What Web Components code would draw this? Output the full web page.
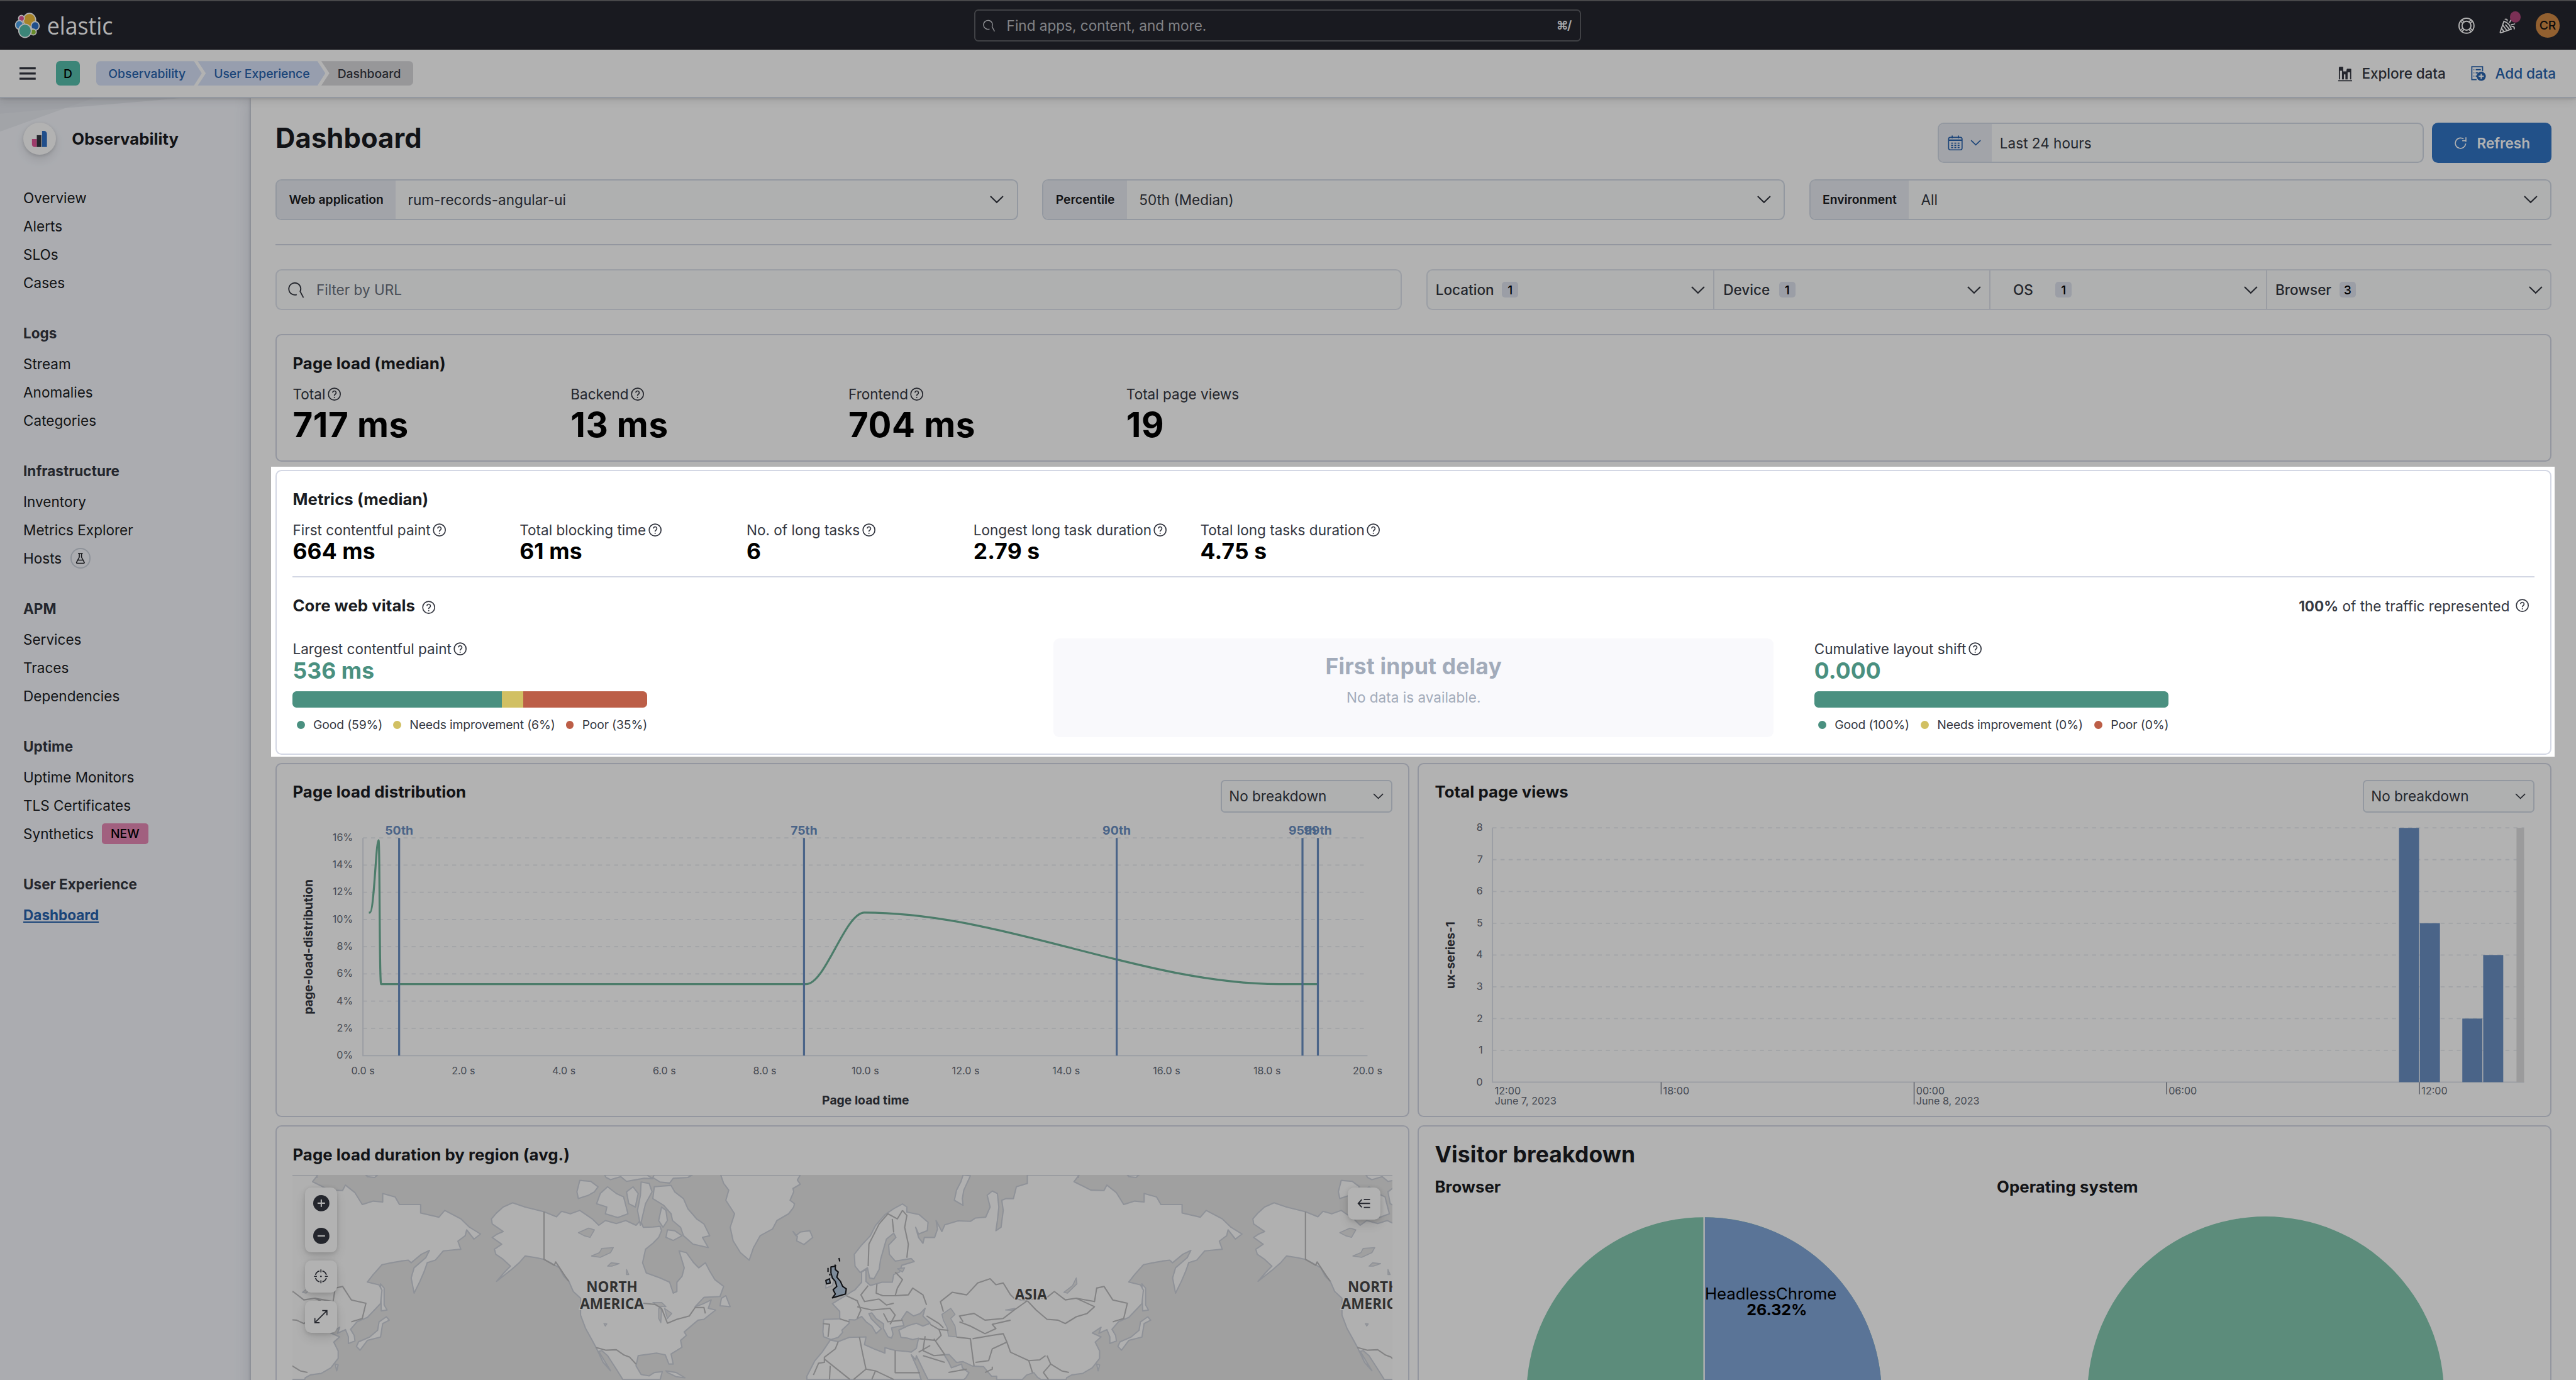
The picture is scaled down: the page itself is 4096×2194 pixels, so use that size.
<!DOCTYPE html>
<html lang="en">
<head>
<meta charset="utf-8">
<title>Dashboard - User Experience - Observability</title>
<style>
html,body{margin:0;padding:0;background:#b2b2b2;overflow:hidden}
body{font-family:Inter,"Liberation Sans",sans-serif}
</style>
</head>
<body>
<ux-app></ux-app>
<script>
const define=(name,render)=>customElements.define(name,class extends HTMLElement{
  connectedCallback(){
    if(this.shadowRoot)return;
    this.attachShadow({mode:'open'}).innerHTML=render(k=>this.getAttribute(k)||'',this);
  }
});

/* ---------- icons ---------- */
const ICONS={
  help:'<circle cx="8" cy="8" r="6.5"/><path d="M6.1 6.4a1.9 1.9 0 1 1 2.9 1.6c-.65.4-1 .75-1 1.5v.2"/><path d="M8 11v1.2"/>',
  search:'<path d="M8.600 12.600A5.900 5.900 0 1 1 12 9.600L15.200 15.600" /><path d="M12 9.600l-.7 1.500 3.900 4.500" stroke="none"/>',
  down:'<path d="M1.800 5l6.200 6 6.200-6" stroke-width="1.35"/>',
  menu:'<path d="M0 2.9h16M0 8h16M0 13.1h16" stroke-width="2"/>',
  lifebuoy:'<circle cx="8" cy="8" r="7.4" stroke-width="1.2"/><circle cx="8" cy="8" r="4.4" stroke-width="1.2"/><path d="M3.2 1.8l2.6 2.8M1.8 3.2l2.8 2.6M12.8 1.8l-2.6 2.8M14.2 3.2l-2.8 2.6M3.2 14.2l2.6-2.8M1.8 12.8l2.8-2.6M12.8 14.2l-2.6-2.8M14.2 12.8l-2.8-2.6" stroke-width="1"/>',
  cheer:'<path d="M4.6 3.6L.9 14.3c-.1.4.3.8.7.7l10.2-3.6c-1-3.6-3.6-6.7-7.2-7.8zM3.4 7.4l4 5.2M2.3 10.6l2.4 3.1M6 6.9l4.1 4.8" stroke-width="1.15"/><path d="M5.4 1.8c1.6-.9 3 .1 2.2 1.9M10 5.2l1.6-3M11.4 7.5c1.2-1.5 2.9-.2 4.1-1.6M12 9c1.8-.8 3.5.4 2.6 2.6" stroke-width="1.15"/>',
  bars:'<path d="M1.6 1.5h3.6v12.6M1.9 14.1V1.5M5.6 6.3h3.2v7.8M6 14.1V6.3M9.9 3.6h3.8v10.5M9.9 14.1V3.6M.6 15.5h14.6" stroke-width="1.2"/><path d="M1.9 1h3.6v4H1.9zM9.8 3h3.9v3.6H9.8zM5.8 6.3h4v2.4h-4z" fill="currentColor" stroke="none"/>',
  add:'<path d="M12.2 5.5V.7H.9v13.6h5" stroke-width="1.2"/><path d="M2.8 3.8h.7M5 3.8h5.4M2.8 7.2h.7M5 7.2h2.5M2.8 10.6h.7M5 10.6h1" stroke-width="1.2"/><circle cx="10.8" cy="10.8" r="4.8" fill="currentColor" stroke="none"/><path d="M8.1 10.8h5.4M10.8 8.1v5.4" stroke="#fff" stroke-width="1.3"/>',
  calendar:'<rect x=".9" y="2.2" width="14.2" height="13.2" rx="1.8"/><path d="M1 5.2h14" stroke-width="1.6"/><path d="M4.7.3v3M11.3.3v3"/><path d="M3.6 8.3h2M7 8.3h2M10.4 8.3h2M3.6 10.6h2M7 10.6h2M10.4 10.6h2M3.6 12.9h2M7 12.9h2M10.4 12.9h2" stroke-width="1.2"/>',
  refresh:'<path d="M14.5 6.5V1M14.5 5.2H10M11.6 3A6.3 6.3 0 1 0 14.2 8.6" stroke-width="1.2"/>',
  beaker:'<path d="M4.600 1h6.800M6.400 1v5.200L2.500 13.400c-.5 1 .1 1.500 1 1.500h9c.9 0 1.500-.5 1-1.500L9.600 6.200V1M4.500 10.300h7" stroke-width="1.350"/>',
  plus:'<circle cx="8" cy="8" r="8" fill="currentColor" stroke="none"/><path d="M4.300 8h7.400M8 4.300v7.400" stroke="#fff" stroke-width="1.300"/>',
  minus:'<circle cx="8" cy="8" r="8" fill="currentColor" stroke="none"/><path d="M4.300 8h7.400" stroke="#fff" stroke-width="1.300"/>',
  fit:'<path d="M9.700 1.900a6.300 6.300 0 0 1 4.400 4.400M14.100 9.700a6.300 6.300 0 0 1-4.400 4.400M6.300 14.100a6.300 6.300 0 0 1-4.400-4.400M1.900 6.300a6.300 6.300 0 0 1 4.400-4.400" stroke-width="1.200"/><path d="M8 .2v3.300M8 12.500v3.300M.2 8h3.300M12.500 8h3.300" stroke-width="1.200"/><circle cx="8" cy="8" r=".9" fill="currentColor" stroke="none"/>',
  expand:'<path d="M1.500 14.500l13-13M9.500 1.200h5.300v5.300M1.200 9.500v5.300h5.300" stroke-width="1.200"/>',
  legend:'<path d="M1.300 8h13.200M5.200 3.600L1.200 8l4 4.400M7.500 3.500h7M7.500 12.500h7" stroke-width="1.300"/>',
  obs:'<path d="M.5 8h4.800v8H3.200A2.700 2.700 0 0 1 .5 13.300z" fill="#e3579a" stroke="none"/><path d="M5.300 4.300h4.500V16H5.300z" fill="#343741" stroke="none"/><path d="M10.500 0h1.800a3 3 0 0 1 3 3v13h-4.800z" fill="#2f70c8" stroke="none"/>'
};
const icon=(n,s=16)=>`<ux-icon name="${n}" style="--s:${s}px"></ux-icon>`;
define('ux-icon',a=>`<style>:host{display:block;flex:none;width:var(--s,16px);height:var(--s,16px)}svg{display:block;width:100%;height:100%;overflow:visible}</style>
<svg viewBox="0 0 16 16" fill="none" stroke="currentColor" stroke-width="1.15">${ICONS[a('name')]}</svg>`);

/* ---------- top bars ---------- */
define('ux-topbar',()=>`<style>
:host{display:flex;flex:none;box-sizing:border-box;height:49px;border-top:1.250px solid #67686b;background:#25262e;align-items:center;color:#fff}
.side{display:flex;align-items:center}
.logo{box-sizing:border-box;padding-left:15px;width:961.500px;flex:none}
.logo svg{display:block}
.search{box-sizing:border-box;flex:none;width:599.500px;height:32px;border:1.250px solid #5c5e64;border-radius:4px;display:flex;align-items:center;font-size:14px;color:#b9bbc0}
.search ux-icon{margin:0 11.500px 0 7.500px;color:#d0d2d7}
.search b{margin-left:auto;padding-right:9px;font-size:12px;font-weight:600;color:#f0f1f4;letter-spacing:-1px}
.right{flex:1;justify-content:flex-end;gap:24px;padding-right:16px}
.news{position:relative}
.dot{position:absolute;left:10.500px;top:-5.700px;width:11px;height:11px;border-radius:50%;background:#b0457a}
.av{width:24px;height:24px;border-radius:50%;background:#d28a46;color:#111;font-size:12px;font-weight:500;display:flex;align-items:center;justify-content:center;margin-left:-4px}
</style>
<div class="side logo"><svg width="98" height="26" viewBox="0 0 98 26" overflow="visible">
<g stroke="#fff" stroke-width="1.100">
<ellipse cx="14.200" cy="7.300" rx="6.100" ry="6.600" fill="#f0bd3c"/><ellipse cx="6.300" cy="5.700" rx="2.900" ry="2.900" fill="#e3579a"/><ellipse cx="4.200" cy="12.200" rx="3.800" ry="4.300" fill="#4ba4ec"/><ellipse cx="19.800" cy="13.200" rx="4" ry="4.300" fill="#2f70c8"/><ellipse cx="18" cy="19.200" rx="2.900" ry="2.900" fill="#94c83d"/><ellipse cx="9.800" cy="18" rx="6.200" ry="6.600" fill="#57bfad"/></g>
<text x="31.500" y="21.800" fill="#fff" font-family="'Open Sans','Noto Sans',sans-serif" font-size="24" font-weight="400" textLength="65" lengthAdjust="spacingAndGlyphs">elastic</text></svg></div>
<div class="search">${icon('search',12)}<span>Find apps, content, and more.</span><b>⌘/</b></div>
<div class="side right">${icon('lifebuoy')}<div class="news">${icon('cheer')}<i class="dot"></i></div><div class="av">CR</div></div>`);

define('ux-crumbbar',()=>`<style>
:host{display:flex;flex:none;box-sizing:border-box;height:48px;background:#fff;border-bottom:1.250px solid #d3dae6;align-items:center;position:relative;z-index:2;box-shadow:0 1px 2px rgba(0,0,0,.08),0 3px 8px rgba(0,0,0,.1);padding:0 20px 0 19px;color:#343741}
.d{margin:0 16px 0 20px;width:24px;height:24px;border-radius:4px;background:#57bfad;color:#000;font-size:12px;font-weight:500;display:flex;align-items:center;justify-content:center}
.c{height:24px;display:flex;align-items:center;font-size:12px;font-weight:500;background:#d8e3f9;color:#2863ae;box-sizing:border-box;white-space:nowrap}
.c1{width:104.200px;padding-left:12px;border-radius:4px 0 0 4px;clip-path:polygon(0 0,96.500px 0,100% 50%,96.500px 100%,0 100%)}
.c2{width:126px;margin-left:-4px;padding-left:16px;clip-path:polygon(0 0,118.200px 0,100% 50%,118.200px 100%,0 100%,8px 50%)}
.c3{width:91px;margin-left:-4px;padding-left:16px;border-radius:0 4px 4px 0;background:#d8d8dc;color:#343741;clip-path:polygon(0 0,100% 0,100% 100%,0 100%,8px 50%)}
.acts{margin-left:auto;display:flex;align-items:center;font-size:14px;font-weight:500;letter-spacing:-.05px}
.acts span{margin-left:9px}.blue{color:#2863ae}.blue:not(span){margin-left:25px}
</style>${icon('menu')}<div class="d">D</div>
<div class="c c1">Observability</div><div class="c c2">User Experience</div><div class="c c3">Dashboard</div>
<div class="acts">${icon('bars',15)}<span>Explore data</span><ux-icon class="blue" name="add" style="--s:15px"></ux-icon><span class="blue">Add data</span></div>`);

/* ---------- side navigation ---------- */
define('ux-navgroup',(a)=>`<style>
:host{display:block;margin-bottom:24px;font-size:14px;color:#1a1c21}
h3{margin:0 0 4px;font-size:14px;line-height:24px;font-weight:700;color:#343741}
::slotted(*){display:flex;align-items:center;height:28px}
</style>${a('heading')?`<h3>${a('heading')}</h3>`:''}<slot></slot>`);
define('ux-badge',(a)=>`<style>:host{display:inline-flex;align-items:center;justify-content:center;box-sizing:border-box}
:host([kind=new]){margin-left:8px;width:46px;height:20px;border-radius:3px;background:#e78ab6;color:#000;font-size:12px;font-weight:500}
:host([kind=lab]){margin-left:8.500px;width:20px;height:20px;border:1.250px solid #cbd1dc;border-radius:50%;color:#1a1c21;background:#f5f7fd}</style><slot></slot>`);
define('ux-sidenav',()=>`<style>
:host{display:block;width:248px;flex:none;background:#f5f7fd;position:relative;overflow:hidden}
.deco{position:absolute;left:0;top:0}
.in{position:relative;padding:24px 23px}
.head{display:flex;align-items:center;gap:16px;font-size:16px;font-weight:700;color:#1a1c21;margin-bottom:28px}
.ic{width:32px;height:32px;border-radius:50%;background:#fff;display:flex;align-items:center;justify-content:center;box-shadow:0 1px 3px rgba(0,0,0,.14),0 5px 10px rgba(0,0,0,.1)}
.sel{color:#2863ae;font-weight:700;text-decoration:underline}
</style>
<svg class="deco" width="248" height="40" viewBox="0 97 248 40"><path d="M0 97H178L0 112.400z" fill="#dfe2ea" opacity=".7"/><path d="M0 97H92L0 130z" fill="#dfe2ea" opacity=".6"/></svg>
<div class="in"><div class="head"><div class="ic">${icon('obs',16)}</div>Observability</div>
<ux-navgroup><div>Overview</div><div>Alerts</div><div>SLOs</div><div>Cases</div></ux-navgroup>
<ux-navgroup heading="Logs"><div>Stream</div><div>Anomalies</div><div>Categories</div></ux-navgroup>
<ux-navgroup heading="Infrastructure"><div>Inventory</div><div>Metrics Explorer</div><div>Hosts<ux-badge kind="lab">${icon('beaker',11)}</ux-badge></div></ux-navgroup>
<ux-navgroup heading="APM"><div>Services</div><div>Traces</div><div>Dependencies</div></ux-navgroup>
<ux-navgroup heading="Uptime"><div>Uptime Monitors</div><div>TLS Certificates</div><div>Synthetics<ux-badge kind="new">NEW</ux-badge></div></ux-navgroup>
<ux-navgroup heading="User Experience"><div class="sel">Dashboard</div></ux-navgroup></div>`);

/* ---------- form controls ---------- */
define('ux-field',(a)=>`<style>
:host{display:flex;box-sizing:border-box;height:40px;border:1.250px solid #d3dae6;border-radius:6px;background:#fbfdfc;align-items:center;font-size:14px;color:#343741;overflow:hidden;flex:1}
:host([small]){height:32px;width:169.500px;flex:none;border-radius:4px}
.pre{height:100%;display:flex;align-items:center;gap:8px;padding:0 12px;background:#e9ebf2;font-size:12px;font-weight:600;color:#1a1c21}
.pre.ico{color:#2863ae;padding:0 9.500px 0 8.500px;gap:7px}
.v{padding-left:12px;flex:1}
:host([small]) .v{padding-left:7px}
:host([date]) .v{padding-left:8px}
.e{margin-right:11.500px}:host([small]) .e{margin-right:6.500px}
.s{margin-left:11px;color:#343741}.s+.v{color:#69707d}
</style>${a('label')?`<div class="pre">${a('label')}</div>`:''}${a('date')?`<div class="pre ico">${icon('calendar',15)}${icon('down',12)}</div>`:''}${a('search')?`<ux-icon class="s" name="search"></ux-icon>`:''}<div class="v"><slot></slot></div>${a('plain')?'':`<ux-icon class="e" name="down" style="--s:${a('small')?12:16}px"></ux-icon>`}`);

define('ux-filter',(a)=>`<style>
:host{display:flex;align-items:center;box-sizing:border-box;padding:0 7px 0 8px;font-size:14px;font-weight:500;color:#343741;border-left:1.250px solid #dde1ea;flex:none}
:host(:first-child){border-left:0}:host(:last-child){padding-right:6.500px}
.t{min-width:48px;text-align:center}
.n{margin-left:8px;width:16px;height:16px;border-radius:3px;background:#dfe3ee;color:#000;font-size:12px;font-weight:500;display:flex;align-items:center;justify-content:center}
ux-icon{margin-left:auto}
</style><span class="t"><slot></slot></span><span class="n">${a('count')}</span>${icon('down')}`);

/* ---------- panels and stats ---------- */
define('ux-panel',()=>`<style>:host{display:flex;flex-direction:column;box-sizing:border-box;border:1.250px solid #d3d7e4;border-radius:6px;background:#fff;padding:15.750px}</style><slot></slot>`);
define('ux-title',()=>`<style>:host{display:block;font-size:16px;line-height:24px;font-weight:700;color:#1a1c21;white-space:nowrap;letter-spacing:.03px}:host([big]){font-size:22px;letter-spacing:.1px}</style><slot></slot>`);
define('ux-stat',(a)=>`<style>
:host{display:block;color:#343741;white-space:nowrap;flex:none}
.l{display:flex;align-items:center;gap:1.500px;height:20px;font-size:14px}
.v{font-size:22px;line-height:24px;font-weight:700;color:#000;letter-spacing:.08px}
:host([large]) .v{font-size:34px;line-height:36px;margin-top:2px;letter-spacing:.35px}
:host([good]) .v{color:#4a9080}
</style><div class="l"><span>${a('label')}</span>${a('nohelp')?'':icon('help',14.500)}</div><div class="v">${a('value')}</div>`);
define('ux-vital',(a)=>{
  const [g,n,p]=a('split').split(',').map(Number);
  return `<style>
:host{display:block;flex:1}
.bar{display:flex;width:350px;height:16px;border-radius:4px;overflow:hidden;margin-top:8px}
.g{background:#4a9080}.n{background:#d1c063}.p{background:#bc5e47}
.lg{display:flex;align-items:center;margin-top:7px;height:20px;width:350px;justify-content:space-between;font-size:12px;color:#343741;letter-spacing:-.08px}
.lg span{display:flex;align-items:center;white-space:nowrap}
i{width:8px;height:8px;border-radius:50%;margin:0 8.200px 0 4px}
</style><ux-stat good label="${a('label')}" value="${a('value')}"></ux-stat>
<div class="bar"><div class="g" style="width:${g}%"></div><div class="n" style="width:${n}%"></div><div class="p" style="width:${p}%"></div></div>
<div class="lg"><span><i class="g"></i>Good (${g}%)</span><span><i class="n"></i>Needs improvement (${n}%)</span><span><i class="p"></i>Poor (${p}%)</span></div>`});
define('ux-nodata',(a)=>`<style>:host{display:block;flex:1;box-sizing:border-box;background:#f9f9fc;border-radius:6px;padding-top:16px;text-align:center;color:#a2abba}
b{display:block;font-size:22px;line-height:24px;letter-spacing:.1px}p{margin:8px 0 0;font-size:14px;line-height:20px}</style><b>${a('heading')}</b><p><slot></slot></p>`);

/* ---------- charts (coordinates are page units) ---------- */
const chartCss=`<style>:host{display:block}svg{display:block;overflow:visible;font-size:10px;fill:#646a77}
.g{stroke:#e7eaf0;stroke-width:1.100;stroke-dasharray:4 4;fill:none}.a{stroke:#e0e4ec;stroke-width:1.300;fill:none}.t{font-size:12px;font-weight:700;fill:#343741}.m{text-anchor:middle}.e{text-anchor:end}</style>`;
define('ux-distchart',()=>{
  let s='';
  for(let i=0;i<=8;i++){const y=1041.8-i*26.86;
    if(i)s+=`<path class="g" d="M358.600 ${y}H1350"/>`;
    s+=`<text class="e" x="348.700" y="${y+3}">${i*2}%</text>`}
  for(let i=0;i<=10;i++)s+=`<text class="m" x="${358.6+i*99.17}" y="1060.200">${i*2}.0 s</text>`;
  const lines=[[394.3,'50th'],[794,'75th'],[1102.7,'90th'],[1286.1,'95th'],[1301.3,'99th']]
    .map(([x,l])=>`<path d="M${x} 827V1041.800" stroke="#6a90c3" stroke-width="2"/><text class="m" x="${x}" y="823.700" style="font-size:12px;font-weight:700;fill:#6a90c3">${l}</text>`).join('');
  return chartCss+`<svg width="100%" height="284" viewBox="289 802 1085.500 284">
${s}<path class="a" d="M358.600 827V1041.800H1350.300"/>
<path d="M364.400 900.600H365.500C369.500 900.600 371.500 829.200 374 829.200C375.200 829.200 374.800 971.300 376.500 971.300H796C815.200 971.300 834.500 900.600 853.700 900.600C990.600 900.600 1127.600 971.300 1264.500 971.300H1301.300" fill="none" stroke="#6db299" stroke-width="2"/>
${lines}
<text class="t m" x="854.800" y="1089.800">Page load time</text>
<text class="t m" transform="translate(309 934.500) rotate(-90)">page-load-distribution</text></svg>`});
define('ux-viewschart',()=>{
  let s='';
  for(let i=0;i<=8;i++){const y=1068-i*31.37;
    if(i)s+=`<path class="g" d="M1473 ${y}H2491.500"/>`;
    s+=`<text class="e" x="1463.500" y="${y+3.2}">${i}</text>`}
  const bars=[[2368,8],[2388.600,5],[2430.500,2],[2451.100,4]].map(([x,v])=>`<rect x="${x}" y="${1068-v*31.37}" width="19.800" height="${v*31.37}" fill="#6a90c3"/>`).join('');
  const ticks=[[1639.600,1080,'18:00'],[1889.300,1090,'00:00'],[2138.500,1080,'06:00'],[2388.200,1080,'12:00']].map(([x,y,l])=>`<path d="M${x} 1068V${y}" stroke="#8b909c"/><text x="${x+2}" y="1080">${l}</text>`).join('');
  return chartCss+`<svg width="100%" height="284" viewBox="1416.500 802 1085.500 284">${s}
<path class="a" d="M1473 817V1068H2491.500"/>${bars}<rect x="2484" y="817" width="7.500" height="251" fill="#dedee0"/>
${ticks}<text x="1475.300" y="1080">12:00</text><text x="1475.300" y="1090">June 7, 2023</text><text x="1891.300" y="1090">June 8, 2023</text>
<text class="t m" transform="translate(1436 942.800) rotate(-90)">ux-series-1</text></svg>`});

/* land outlines on a Mercator grid; one world spans 1043 units */
const LAND=[
'328,495 345,520 371,548 388,578 395,545 407,560 420,540 437,590 446,628 455,600 470,618 483,600 497,628 503,600 507,640 520,638 530,634 532,660 528,700 520,735 510,770 506,850 511,910 530,940 543,965 548,1030 553,1020 553,965 560,930 563,880 556,780 566,790 576,850 583,880 592,850 598,900 605,950 617,990 612,1050 590,1055 578,1110 588,1095 600,1070 596,1120 606,1130 590,1185 582,1190 575,1215 563,1260 566,1280 558,1310 560,1350 545,1390 548,1450 542,1450 537,1395 525,1385 500,1400 497,1460 504,1512 515,1520 522,1500 533,1495 530,1542 479,1542 470,1480 458,1400 450,1370 446,1375 462,1490 452,1440 442,1350 437,1310 428,1240 421,1160 421,1060 411,1020 405,960 398,930 392,880 380,850 371,830 360,820 345,810 337,850 325,895 306,960 316,910 325,870 315,830 305,800 303,770 313,740 300,700 307,680 315,665 300,620 299,590 306,555 315,520',
'420,362 435,368 445,400 440,430 432,450 418,470 416,430','448,440 458,400 470,440 480,460 486,560 472,582 455,560 457,520 443,500',
'484,430 493,400 500,440 496,520 487,500','504,372 515,380 519,430 510,500 503,628 499,540 503,450','522,400 545,392 550,430 562,470 568,530 580,590 590,620 598,690 588,700 596,760 575,740 562,690 558,640 547,600 545,560 535,510 520,470','454,330 512,330 520,352 508,350 484,368 476,340 462,358 456,345','522,330 574,330 568,345 548,350 543,378 530,372 520,345','540,655 550,660 560,690 548,718 538,700','532,520 538,540 540,600 534,640 528,600',
'613,330 722,330 718,360 722,385 712,410 713,430 708,480 714,500 713,520 706,560 690,600 684,650 667,690 658,760 652,835 640,790 630,720 626,640 632,560 620,480 624,420 617,380',
'712,665 716,690 722,668 735,660 739,700 727,742 717,720 718,695','614,1060 620,1045 626,1110 612,1105',
'945,330 955,335 946,420 944,470 945,510 933,480 936,420 942,370',
'1170,330 1186,330 1182,345 1172,340','1093,330 1103,330 1103,345','757,970 764,935 768,950 766,985 757,1000','1198,1170 1202,1190 1193,1210 1190,1290 1172,1310 1162,1368 1157,1345 1160,1318 1175,1290 1186,1250 1188,1200','1190,975 1195,1000 1195,1100 1199,1130 1191,1135','538,1490 552,1500 564,1531 552,1525 540,1500','1128,1450 1132,1455 1130,1490',
'862,502 868,520 868,550 885,565 897,610 896,660 884,680 880,640 884,700 890,735 892,700 906,700 910,650 908,600 916,665 920,625 938,602 955,605 962,585 976,580 982,520 978,450 985,425 992,440 994,520 992,600 990,660 997,640 1000,540 998,480 1004,470 1014,470 1018,400 1033,380 1033,330 1104,330 1097,370 1111,400 1120,420 1138,422 1142,390 1155,435 1165,505 1180,485 1193,490 1193,440 1210,460 1216,505 1245,505 1245,555 1270,580 1278,540 1300,590 1312,640 1327,680 1318,710 1308,655 1306,690 1296,722 1300,770 1276,780 1265,835 1254,850 1250,900 1244,960 1236,1030 1232,940 1236,880 1252,820 1257,777 1246,800 1232,850 1228,835 1218,840 1205,850 1192,862 1180,920 1172,964 1188,981 1192,1013 1190,1092 1172,1174 1158,1199 1149,1244 1154,1281 1155,1313 1146,1328 1146,1289 1142,1246 1131,1268 1134,1232 1122,1266 1134,1289 1126,1320 1132,1372 1132,1416 1122,1472 1109,1505 1094,1514 1087,1531 1086,1542 1052,1542 1047,1529 1042,1501 1032,1515 1026,1542 991,1542 991,1522 984,1522 977,1486 973,1465 958,1462 945,1436 936,1440 926,1394 919,1394 925,1436 929,1472 943,1450 944,1472 953,1501 949,1530 946,1542 897,1542 893,1508 881,1401 880,1424 874,1395 883,1480 887,1536 888,1542 731,1542 731,1522 742,1430 752,1379 763,1308 774,1317 789,1292 812,1289 810,1335 823,1360 838,1385 838,1353 852,1369 867,1375 874,1379 881,1357 884,1297 876,1305 868,1296 860,1292 857,1249 870,1222 881,1208 890,1225 900,1208 890,1165 893,1120 886,1151 877,1165 868,1138 861,1182 864,1223 855,1228 847,1236 849,1273 847,1296 842,1288 836,1241 836,1211 826,1182 820,1147 816,1151 819,1180 826,1211 833,1241 829,1257 826,1270 820,1225 812,1199 806,1168 797,1189 789,1187 789,1208 779,1249 780,1262 774,1292 764,1305 754,1288 753,1260 754,1186 776,1182 776,1138 766,1092 775,1068 785,1043 792,1022 797,1010 806,965 806,905 812,890 812,960 818,985 834,965 848,965 850,920 858,905 861,865 878,843 874,825 852,840 844,800 843,745 853,700 850,675 840,710 836,770 832,830 830,890 823,945 817,940 814,880 804,908 797,870 796,800 806,745 818,690 825,630 838,565 850,530'];
const LAKES=['916,1156 928,1120 934,1156 928,1180 934,1225 936,1289 925,1284 923,1233 918,1191','1100,940 1101,975 1088,1030 1083,1025 1095,985','418,672 432,645 440,655 434,700 426,690','436,810 447,790 450,765 466,760 462,790 448,818','458,870 463,850 474,855 464,870','484,890 487,920 484,920','520,1085 532,1085 538,1110 528,1108','528,1120 532,1125 531,1205 528,1180','536,1120 546,1150 540,1180','855,885 865,880 862,905','1003,1130 1016,1120 1012,1132','453,1210 457,1212 455,1225'];
const BORDERS=['371,548 371,830 385,865 387,845 400,930 405,960','507,1090 523,1097 532,1120 540,1208 553,1185 570,1165 578,1115 590,1115 592,1150','442,1352 456,1368 470,1365 480,1395 488,1408 497,1450',
'815,870 816,740 830,620 842,560 855,590 862,540','850,670 848,590','862,540 868,570 865,640 870,740 868,820','852,905 862,950 855,1000 852,1045 870,1040 876,1000 890,1040 895,1100','827,975 826,1030 835,1045 852,1045','815,985 805,1040 810,1080 830,1065','785,1045 800,1075 805,1130 800,1180','800,1110 820,1130 845,1120 852,1160 845,1215','830,1065 840,1100 850,1090','836,1150 842,1200 862,1190','776,1182 789,1200','753,1210 762,1215 760,1290',
'895,1165 912,1210 918,1235','900,1215 912,1245 915,1280 908,1310 885,1300','912,1245 925,1250','918,1140 914,1080 930,1025 950,1040 965,970 982,945 990,980 1000,970 1010,1040 1016,1065 1033,1075','945,1200 940,1165 960,1150 975,1190 1000,1180 1015,1130 1033,1075','1033,1075 1045,1130 1060,1185 1075,1190 1085,1210 1100,1170 1115,1150 1125,1110 1110,1080 1100,1060 1085,1070 1070,1020 1060,1055 1035,1068','1100,1060 1125,1080 1128,1000 1138,990 1150,1070 1170,1090 1165,1180 1150,1200','940,1200 955,1225 975,1270 990,1240 985,1215 1010,1190','936,1290 955,1300 958,1400 960,1460','958,1300 985,1280 1000,1270 1005,1320 985,1360 980,1430 962,1440','1005,1320 1010,1380 1035,1430 1050,1425 1058,1400','985,1465 985,1480 975,1500','1035,1430 1040,1500','1060,1400 1065,1450 1055,1500 1062,1541','1065,1450 1080,1490 1090,1500','893,1285 890,1370 905,1400 920,1395','884,1380 900,1340','905,1300 920,1395','890,1400 920,1440','925,1500 950,1480',
'803,1290 807,1380 812,1480 825,1490 850,1541','852,1370 852,1501 886,1501','755,1420 790,1541','774,1317 770,1360 755,1410 755,1440 747,1445 740,1515','812,1480 795,1541','825,1490 820,1541','763,1460 762,1541'];
define('ux-regionmap',()=>{
  const poly=(l,c)=>l.map(p=>`<polygon points="${p}" class="${c}"/>`).join('');
  const world=`<g id="w">${poly(LAND,'land')}${poly(LAKES,'lake')}${BORDERS.map(p=>`<polyline points="${p}" class="bd"/>`).join('')}</g>`;
  return `<style>
:host{display:block;position:relative;height:210px;overflow:hidden}
svg.m{display:block}
.land{fill:#fdfdfd;stroke:#cdd1da;stroke-width:1.300}.lake{fill:#e6e6e6;stroke:#cdd1da;stroke-width:1}.bd{fill:none;stroke:#bcbcbe;stroke-width:1.300}
.land,.lake,.bd,.uk{vector-effect:non-scaling-stroke;stroke-linejoin:round}
.uk{fill:#b4c8dd;stroke:#16181d;stroke-width:1.300}
.tx text{font-family:"Open Sans","Noto Sans",sans-serif;font-size:14px;font-weight:700;fill:#484848;text-anchor:middle;paint-order:stroke;stroke:#fff;stroke-width:2px}
.ctl{position:absolute;display:flex;flex-direction:column;border-radius:6px;background:#fff;width:32px;box-shadow:0 1px 4px rgba(0,0,0,.12),0 5px 12px rgba(0,0,0,.12);color:#343741}
.ctl div{height:32px;display:flex;align-items:center;justify-content:center}
.col{position:absolute;left:12px;top:12px;display:flex;flex-direction:column;gap:8px}
.col .ctl{position:static}
</style>
<svg class="m" width="100%" height="210" viewBox="289 1160 1085.500 210" preserveAspectRatio="xMinYMin slice">
<rect x="280" y="1150" width="1110" height="230" fill="#e6e6e6"/>
<g transform="translate(270 1105) scale(.72067 .166667)">${world}<use href="#w" x="-1043"/><use href="#w" x="1043"/>
<polygon class="uk" points="764,875 770,870 770,890 774,905 772,935 777,960 780,990 785,1005 784,1035 776,1045 766,1058 770,1035 767,1010 772,990 770,960 766,940 764,910"/>
<polygon class="uk" points="757,955 762,945 763,970 758,975"/><path class="uk" d="M775 822l1 20M769 862l2 6M760 880v25M762 915l1 10"/></g>
<g class="tx"><text x="604.400" y="1275.200">NORTH</text><text x="604.400" y="1292">AMERICA</text><text x="1018" y="1282.700">ASIA</text><text x="1356" y="1275.200">NORTH</text><text x="1356" y="1292">AMERICA</text></g>
</svg>
<div class="col"><div class="ctl"><div>${icon('plus')}</div><div>${icon('minus')}</div></div><div class="ctl"><div>${icon('fit',14)}</div></div><div class="ctl"><div>${icon('expand',14)}</div></div></div>
<div class="ctl" style="right:12px;top:12px"><div>${icon('legend',14)}</div></div>`});

define('ux-pie',(a)=>{
  const split=a('share');
  return `<style>:host{display:block;flex:1}svg{display:block;overflow:visible;font-size:16px;text-anchor:middle}</style><ux-title>${a('heading')}</ux-title>
<svg width="530" height="178" viewBox="0 1184 530 178">${split?`
<circle cx="265.500" cy="1376.800" r="175.300" fill="#85c9b0"/>
<path d="M265.500 1376.800V1201.500A175.300 175.300 0 0 1 440.200 1391.300z" fill="#82a6d9"/><path d="M265.500 1201V1380" stroke="#fff" stroke-width="1.500"/>
<text x="331.300" y="1282.500">HeadlessChrome</text><text x="337.300" y="1298.300" font-weight="700" font-size="15.500">26.32%</text>`
:`<circle cx="265.500" cy="1376.800" r="176" fill="#85c9b0"/>`}</svg>`});

/* spotlight: everything around the box is dimmed */
define('ux-spotlight',()=>`<style>:host{position:absolute;left:267.500px;top:460.500px;width:2254.200px;height:286.500px;z-index:9;pointer-events:none;box-shadow:0 0 0 3000px rgba(0,0,0,.3)}</style>`);

/* ---------- page ---------- */
define('ux-dashboard',()=>`<style>
:host{display:block;box-sizing:border-box;width:2295px;flex:none;padding:0 24px;background:#fff;position:relative;z-index:1;box-shadow:0 0 3px rgba(60,70,90,.35),0 0 16px rgba(60,70,90,.18)}
.row{display:flex}
.top{height:80px;align-items:flex-start}
h1{margin:21.500px 0 0;font-size:27px;line-height:36px;font-weight:700;color:#1a1c21;letter-spacing:.05px}
.date{display:flex;width:606px;gap:8px;margin:24px 0 0 auto}
.btn{width:118px;height:40px;border-radius:6px;background:#3274c4;color:#fff;display:flex;align-items:center;justify-content:center;gap:10px;font-size:14px;font-weight:600}
.fields{gap:24px}
hr{border:0;height:1.250px;background:#d3d7e4;margin:23.900px 0 23.850px;width:100%}
.url{flex:none;width:1112px}
.filters{box-sizing:border-box;display:flex;margin-left:24px;width:1111px;height:40px;border:1.250px solid #dfe3ec;border-radius:6px;background:#fbfdfc}
.stats{margin-top:8px}
.p1{margin-top:24px;height:126px}.p1 ux-stat{width:274.300px}
.p2{margin-top:8px;height:281px}.p2>.stats ux-stat{width:224px}
.p2 hr{margin:12px 0 15.750px;flex:none}
.cw{justify-content:space-between;align-items:center;height:24px}
.cw>div{display:flex;align-items:center;gap:6px;font-size:14px;color:#343741}
.cw>div:last-child{padding-right:5px;gap:5px}
.vit{margin-top:20.500px;height:97.500px;gap:40px;flex:none}
.g2{margin-top:8px;gap:8px}.g2>*{flex:1 1 0;min-width:0}
.g2.a>*{height:350px}.g2.b>*{height:300px}
.ph{height:32px;justify-content:space-between}
</style>
<div class="row top"><h1>Dashboard</h1><div class="date"><ux-field date="1" plain="1">Last 24 hours</ux-field><div class="btn">${icon('refresh',13)}Refresh</div></div></div>
<div class="row fields"><ux-field label="Web application">rum-records-angular-ui</ux-field><ux-field label="Percentile">50th (Median)</ux-field><ux-field label="Environment">All</ux-field></div>
<hr>
<div class="row"><ux-field class="url" search="1" plain="1" style="border-color:#dfe3ec">Filter by URL</ux-field><div class="filters"><ux-filter count="1" style="width:281.800px">Location</ux-filter><ux-filter count="1" style="width:273px">Device</ux-filter><ux-filter count="1" style="width:273px">OS</ux-filter><ux-filter count="3" style="width:280.700px">Browser</ux-filter></div></div>
<ux-panel class="p1"><ux-title>Page load (median)</ux-title><div class="row stats"><ux-stat large label="Total" value="717 ms"></ux-stat><ux-stat large label="Backend" value="13 ms"></ux-stat><ux-stat large label="Frontend" value="704 ms"></ux-stat><ux-stat large nohelp="1" label="Total page views" value="19"></ux-stat></div></ux-panel>
<ux-panel class="p2"><ux-title>Metrics (median)</ux-title><div class="row stats"><ux-stat label="First contentful paint" value="664 ms"></ux-stat><ux-stat label="Total blocking time" value="61 ms"></ux-stat><ux-stat label="No. of long tasks" value="6"></ux-stat><ux-stat label="Longest long task duration" value="2.79 s"></ux-stat><ux-stat label="Total long tasks duration" value="4.75 s"></ux-stat></div><hr>
<div class="row cw"><div><ux-title>Core web vitals</ux-title><ux-icon name="help" style="--s:14.500px;margin-top:3px"></ux-icon></div><div><span><b>100%</b> of the traffic represented</span>${icon('help',14.500)}</div></div>
<div class="row vit"><ux-vital label="Largest contentful paint" value="536 ms" split="59,6,35"></ux-vital><ux-nodata heading="First input delay">No data is available.</ux-nodata><ux-vital label="Cumulative layout shift" value="0.000" split="100,0,0"></ux-vital></div></ux-panel>
<div class="row g2 a"><ux-panel><div class="row ph"><ux-title>Page load distribution</ux-title><ux-field small="1">No breakdown</ux-field></div><ux-distchart></ux-distchart></ux-panel>
<ux-panel><div class="row ph"><ux-title>Total page views</ux-title><ux-field small="1">No breakdown</ux-field></div><ux-viewschart></ux-viewschart></ux-panel></div>
<div class="row g2 b"><ux-panel><ux-title>Page load duration by region (avg.)</ux-title><ux-regionmap style="margin-top:8px"></ux-regionmap></ux-panel>
<ux-panel><ux-title big>Visitor breakdown</ux-title><div class="row" style="margin-top:8px;gap:24px"><ux-pie heading="Browser" share="26.320"></ux-pie><ux-pie heading="Operating system"></ux-pie></div></ux-panel></div>`);

define('ux-app',()=>`<style>
:host{display:flex;flex-direction:column;position:relative;width:2543.100px;height:1362.200px;overflow:hidden;zoom:1.61069;background:#fff}
.body{display:flex;flex:1;min-height:0}
ux-dashboard{height:1320px}
</style><ux-topbar></ux-topbar><ux-crumbbar></ux-crumbbar><div class="body"><ux-sidenav></ux-sidenav><ux-dashboard></ux-dashboard></div><ux-spotlight></ux-spotlight>`);
</script>
</body>
</html>
